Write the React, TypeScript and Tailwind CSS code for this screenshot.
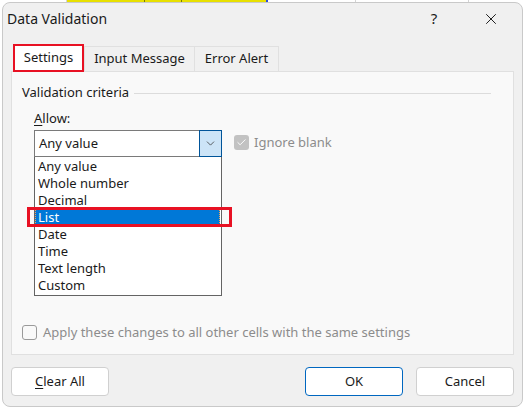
import { Check, ChevronDown, X } from 'lucide-react';

const items = ['Any value', 'Whole number', 'Decimal', 'List', 'Date', 'Time', 'Text length', 'Custom'];

export default function App() {
  return (
    <div
      className="relative w-[525px] h-[408px] overflow-hidden bg-white text-[13px] text-[#1a1a1a]"
      style={{ fontFamily: '"Noto Sans", "Open Sans", sans-serif' }}
    >
      {/* spreadsheet peeking out behind the dialog */}
      <div className="absolute left-0 top-0 flex h-[3px] w-full">
        <div className="w-[67px] border-r border-[#d4d4d4]" />
        <div className="w-[78px] bg-[#e8e000] border-r border-[#7a7a00]" />
        <div className="w-[37px] bg-[#e8e000] border-r border-[#7a7a00]" />
        <div className="w-[86px] bg-[#e8e000] border-r-2 border-[#2b4dd6]" />
        <div className="w-[88px] border-r border-[#d4d4d4]" />
        <div className="w-[113px] border-r border-[#d4d4d4]" />
      </div>

      <div className="absolute left-[2px] top-[2px] flex h-[405px] w-[521px] flex-col rounded-lg border border-[#c9c9c9] bg-[#f0f0f0]">
        {/* title bar */}
        <div className="flex h-[31px] items-center pl-[4px]">
          <span className="flex-1 text-[14px]">Data Validation</span>
          <span className="w-[20px] pr-[4px] text-center text-[15px]">?</span>
          <div className="flex w-[76px] justify-center pl-[14px]">
            <X className="h-[18px] w-[18px]" strokeWidth={1.3} />
          </div>
        </div>

        {/* tabs */}
        <div className="ml-[10px] mt-[10px] flex h-[27px] items-end">
          <div className="relative z-10 -mb-[1px] flex h-[28px] w-[71px] items-center justify-center border-2 border-[#e81123] bg-white">
            Settings
          </div>
          <div className="flex h-[25px] w-[111px] items-center justify-center border border-b-0 border-[#e0e0e0] bg-[#f0f0f0]">
            Input Message
          </div>
          <div className="flex h-[25px] w-[84px] items-center justify-center border border-b-0 border-l-0 border-[#e0e0e0] bg-[#f0f0f0]">
            Error Alert
          </div>
        </div>

        {/* panel */}
        <div className="mx-[8px] flex h-[284px] flex-col border border-[#e0e0e0] bg-[#f9f9f9] px-[10px]">
          <div className="mt-[11px] flex h-[20px] items-center">
            <span>Validation criteria</span>
            <div className="ml-[5px] mr-[12px] h-px flex-1 bg-[#dcdcdc]" />
          </div>
          <div className="ml-[12px] mt-[6px] flex h-[20px] items-center">
            <span>
              <span className="underline underline-offset-2">A</span>llow:
            </span>
          </div>

          <div className="ml-[12px] mt-[1px] flex items-start">
            <div className="flex w-[188px] flex-col">
              <div className="flex h-[27px] border border-[#7a7a7a] bg-white">
                <span className="flex flex-1 items-center pl-[4px] pt-[1px]">Any value</span>
                <div className="-my-px -mr-px flex w-[23px] items-center justify-center border border-[#005499] bg-[#cce4f7]">
                  <ChevronDown className="h-[13px] w-[13px] text-[#333]" strokeWidth={1.4} />
                </div>
              </div>
              <div className="flex flex-col border border-t-0 border-[#646464] bg-white py-px">
                {items.map((it) => (
                  <div key={it} className="relative h-[17px] leading-[17px]">
                    {it === 'List' ? (
                      <>
                        <div className="mr-px h-[16px] border border-dotted border-[#f3a35a] bg-[#0078d7] pl-[2px] leading-[14px] text-white">
                          {it}
                        </div>
                        <div className="absolute -left-[8px] -right-[11px] -top-[2px] h-[20px] border-[3px] border-[#e81123]" />
                      </>
                    ) : (
                      <div className="pl-[3px]">{it}</div>
                    )}
                  </div>
                ))}
              </div>
            </div>

            <div className="ml-[12px] mt-[3px] flex items-center gap-[5px]">
              <div className="flex h-[15px] w-[15px] items-center justify-center rounded-[3px] bg-[#c2c2c2]">
                <Check className="h-[11px] w-[11px] text-white" strokeWidth={2} />
              </div>
              <span className="text-[#8c8c8c]">Ignore blank</span>
            </div>
          </div>

          <div className="mt-[27px] flex items-center gap-[6px]">
            <div className="h-[15px] w-[15px] rounded-[3px] border border-[#9a9a9a] bg-[#f9f9f9]" />
            <span className="text-[#8c8c8c]">Apply these changes to all other cells with the same settings</span>
          </div>
        </div>

        {/* buttons */}
        <div className="mt-[12px] flex px-[8px]">
          <button className="h-[29px] w-[98px] rounded-[4px] border border-[#d0d0d0] bg-white">
            <span className="underline underline-offset-2">C</span>lear All
          </button>
          <div className="flex-1" />
          <button className="h-[29px] w-[98px] rounded-[4px] border border-[#0067c0] bg-white">OK</button>
          <button className="ml-[13px] h-[29px] w-[98px] rounded-[4px] border border-[#d0d0d0] bg-white">Cancel</button>
        </div>
      </div>
    </div>
  );
}
